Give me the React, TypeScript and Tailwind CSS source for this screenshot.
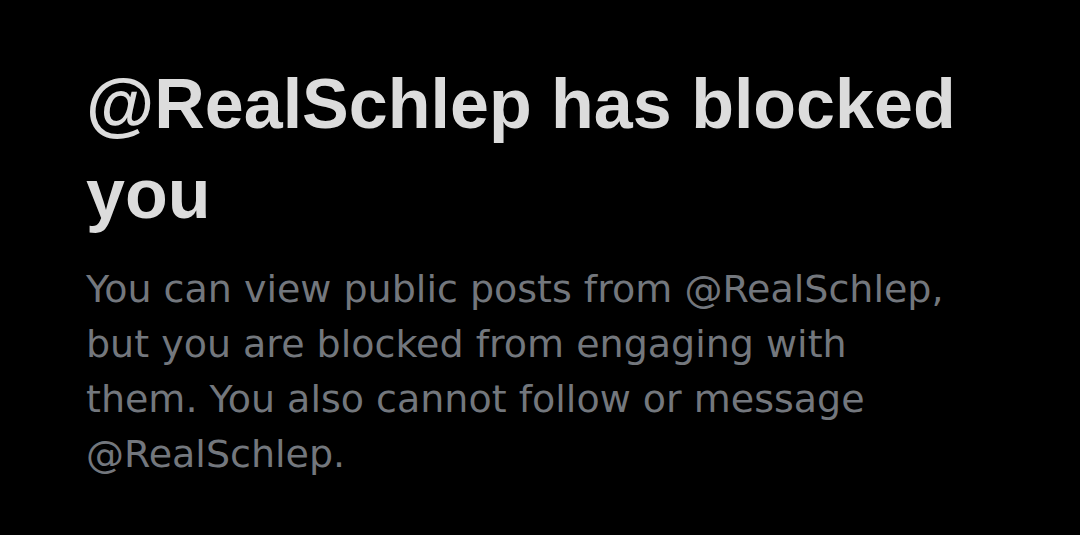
import React from 'react';

export default function App() {
  const handle = '@RealSchlep';

  return (
    <div className="min-h-screen w-full bg-black">
      <div className="pt-[59px] pl-[86px] pr-[60px]">
        {/* Header */}
        <h1 className="font-['Liberation_Sans',Arial,sans-serif] text-[70px] leading-[90px] font-bold text-[#dcdcdc] max-w-[900px]">
          {handle} has blocked you
        </h1>
        {/* Body */}
        <p className="mt-[23px] font-['DejaVu_Sans',sans-serif] text-[38px] leading-[55px] text-[#73777d]">
          You can view public posts from {handle},
          <br />
          but you are blocked from engaging with
          <br />
          them. You also cannot follow or message
          <br />
          {handle}.
        </p>
      </div>
    </div>
  );
}
